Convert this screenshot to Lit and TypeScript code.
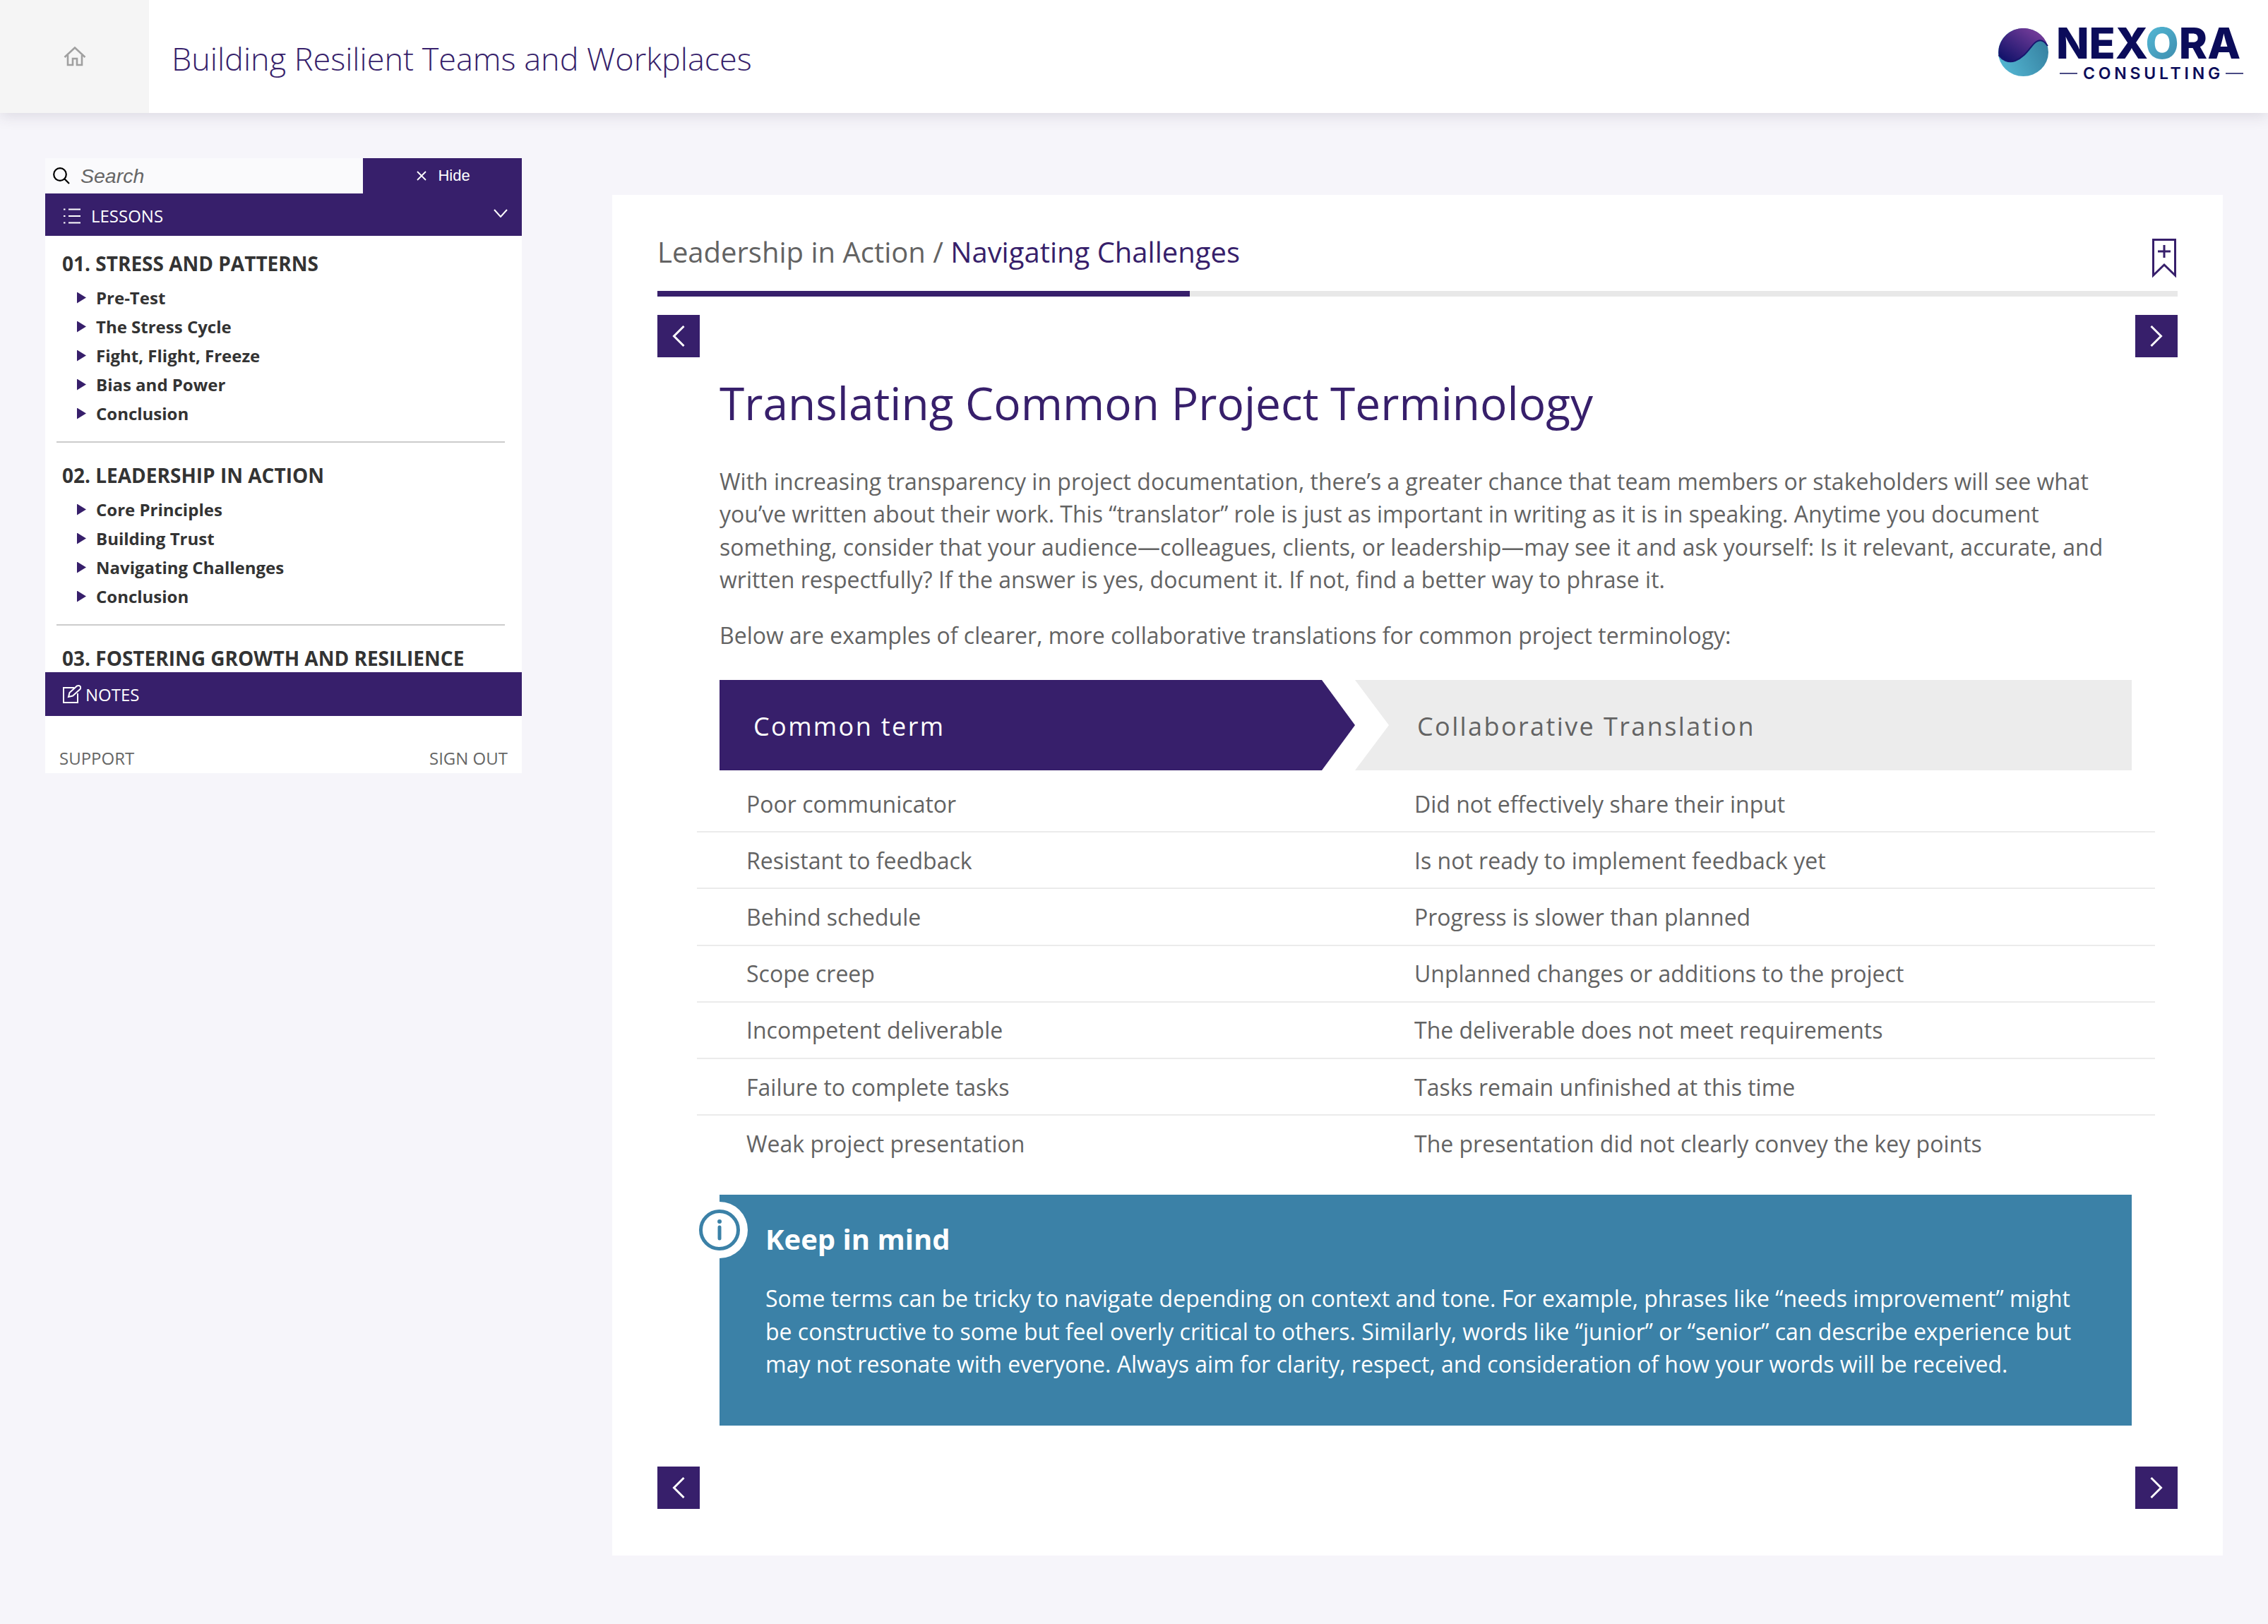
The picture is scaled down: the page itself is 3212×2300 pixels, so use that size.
import { LitElement, html, css } from 'lit';
import { customElement } from 'lit/decorators.js';

const sections = [
  { title: '01. STRESS AND PATTERNS', items: ['Pre-Test', 'The Stress Cycle', 'Fight, Flight, Freeze', 'Bias and Power', 'Conclusion'] },
  { title: '02. LEADERSHIP IN ACTION', items: ['Core Principles', 'Building Trust', 'Navigating Challenges', 'Conclusion'] },
  { title: '03. FOSTERING GROWTH AND RESILIENCE', items: [] as string[] },
];

const rows = [
  ['Poor communicator', 'Did not effectively share their input'],
  ['Resistant to feedback', 'Is not ready to implement feedback yet'],
  ['Behind schedule', 'Progress is slower than planned'],
  ['Scope creep', 'Unplanned changes or additions to the project'],
  ['Incompetent deliverable', 'The deliverable does not meet requirements'],
  ['Failure to complete tasks', 'Tasks remain unfinished at this time'],
  ['Weak project presentation', 'The presentation did not clearly convey the key points'],
];

const chevron = (d: string) => html`<svg viewBox="0 0 18 30" width="18" height="30"><path d=${d} fill="none" stroke="#fff" stroke-width="3"/></svg>`;
const prev = 'M16.5 1 L2.5 15 L16.5 29';
const next = 'M1.5 1 L15.5 15 L1.5 29';

@customElement('app-root')
export class AppRoot extends LitElement {
  static styles = css`
    :host {
      display: block;
      min-height: 2300px;
      background: #f6f5fa;
      font-family: 'Open Sans', 'Noto Sans', sans-serif;
      color: #636363;
    }

    .top {
      height: 160px;
      background: #fff;
      display: flex;
      align-items: center;
      box-shadow: 0 4px 20px rgba(60, 50, 80, 0.14);
      position: relative;
    }
    .home {
      width: 211px;
      height: 160px;
      background: #f5f5f5;
      display: flex;
      align-items: center;
      justify-content: center;
    }
    .courseTitle {
      margin: 4px 0 0 32px;
      font-size: 45px;
      font-weight: 300;
      color: #371f6b;
      flex: 1;
    }

    .logo {
      display: flex;
      align-self: flex-start;
      gap: 11px;
      margin-right: 35px;
    }
    .logoMark {
      margin-top: 40px;
    }
    .logoWords {
      margin-top: 30px;
      display: flex;
      flex-direction: column;
      font-family: Inter, sans-serif;
      color: #0b0c5a;
    }
    .nexora {
      font-size: 61px;
      font-weight: 800;
      line-height: 62px;
    }
    .nexora span {
      background: linear-gradient(135deg, #56bfdb, #3b86a8);
      -webkit-background-clip: text;
      background-clip: text;
      color: transparent;
    }
    .consulting {
      display: flex;
      align-items: center;
      gap: 8px;
      padding-left: 5px;
      font-size: 23px;
      font-weight: 600;
      line-height: 24px;
      letter-spacing: 4.8px;
    }
    .consulting span {
      margin-right: -5px;
    }
    .consulting i {
      display: block;
      width: 25px;
      height: 2px;
      background: #4a4b85;
    }

    .page {
      display: flex;
      align-items: flex-start;
      padding: 64px 64px 0 64px;
    }

    .side {
      width: 675px;
      background: #fff;
      flex: none;
    }
    .searchRow {
      display: flex;
      height: 50px;
    }
    .search {
      flex: 1;
      background: #fafafc;
      display: flex;
      align-items: center;
      gap: 15px;
      padding-left: 11px;
      font: italic 28.5px 'Liberation Sans', Arial, sans-serif;
      color: #666;
    }
    .hide {
      width: 225px;
      box-sizing: border-box;
      padding-left: 3px;
      background: #371f6b;
      color: #fff;
      display: flex;
      align-items: center;
      justify-content: center;
      gap: 16px;
      font: 22px 'Liberation Sans', Arial, sans-serif;
    }
    .lessons {
      height: 60px;
      box-sizing: border-box;
      background: #371f6b;
      color: #fff;
      display: flex;
      align-items: center;
      gap: 15px;
      padding: 3px 20px 0 26px;
      font-size: 24px;
    }
    .lessons .arrow {
      margin-left: auto;
      margin-top: -7px;
    }
    .tree {
      height: 618px;
      overflow: hidden;
      padding: 0 24px 0 16px;
      box-sizing: border-box;
    }
    .section {
      border-bottom: 2px solid #cccccc;
      padding: 27px 0 19px;
    }
    .section:first-child {
      padding-top: 20px;
    }
    .section:last-child {
      border-bottom: none;
    }
    .section h3 {
      margin: 0;
      padding-left: 8px;
      font-size: 28px;
      line-height: 38px;
      font-weight: 700;
      color: #333;
    }
    .section ul {
      list-style: none;
      margin: 9px 0 0 0;
      padding: 0;
    }
    .section li {
      height: 41px;
      display: flex;
      align-items: center;
      gap: 14px;
      padding-left: 29px;
      font-size: 24px;
      font-weight: 700;
      color: #333;
    }
    .tri {
      width: 13px;
      height: 16px;
      background: #371f6b;
      clip-path: polygon(0 0, 100% 50%, 0 100%);
    }
    .notes {
      height: 62px;
      background: #371f6b;
      color: #fff;
      display: flex;
      align-items: center;
      gap: 6px;
      padding-left: 25px;
      font-size: 24px;
    }
    .sideFoot {
      height: 81px;
      box-sizing: border-box;
      display: flex;
      justify-content: space-between;
      align-items: flex-end;
      padding: 0 20px 5px 20px;
      font-size: 24px;
      line-height: 32px;
      color: #666;
    }

    .card {
      margin: 52px 0 0 128px;
      width: 2281px;
      height: 1927px;
      background: #fff;
      box-sizing: border-box;
      padding: 0 64px;
      display: flex;
      flex-direction: column;
    }
    .crumbRow {
      height: 136px;
      display: flex;
      align-items: flex-start;
      justify-content: space-between;
    }
    .crumb {
      margin-top: 53px;
      font-size: 40px;
      line-height: 56px;
      color: #636363;
    }
    .crumb b {
      font-weight: 400;
      color: #371f6b;
    }
    .mark {
      margin: 62px 2px 0 0;
    }
    .progress {
      height: 8px;
      background: #e8e8e8;
    }
    .progress div {
      height: 100%;
      background: #371f6b;
    }
    .navRow {
      display: flex;
      justify-content: space-between;
    }
    .navRow.first {
      margin-top: 26px;
    }
    .navRow.last {
      margin-bottom: 66px;
    }
    .navBtn {
      width: 60px;
      height: 60px;
      background: #371f6b;
      display: flex;
      align-items: center;
      justify-content: center;
    }
    .content {
      padding-left: 88px;
      padding-right: 65px;
      flex: 1;
    }
    h1 {
      margin: 20px 0 0 0;
      font-size: 64px;
      line-height: 90px;
      font-weight: 400;
      color: #371f6b;
    }
    .content p {
      margin: 0;
      font-size: 32px;
      line-height: 46.4px;
    }
    .content p.intro {
      margin-top: 43px;
    }
    .content p.intro2 {
      margin-top: 32px;
    }

    .termsHead {
      margin-top: 40px;
      display: flex;
      height: 128px;
      font-size: 36px;
      letter-spacing: 2.4px;
    }
    .termHeadA {
      width: 900px;
      background: #371f6b;
      color: #fff;
      clip-path: polygon(0 0, 853px 0, 100% 50%, 853px 100%, 0 100%);
      display: flex;
      align-items: center;
      padding: 3px 0 0 48px;
      box-sizing: border-box;
    }
    .termHeadB {
      width: 1100px;
      background: #ececec;
      clip-path: polygon(0 0, 100% 0, 100% 100%, 0 100%, 48px 50%);
      display: flex;
      align-items: center;
      padding: 3px 0 0 88px;
      box-sizing: border-box;
    }
    .termRows {
      margin: 8px -33px 0 -32px;
    }
    .termRow {
      height: 78.2px;
      border-bottom: 2px solid #ebebeb;
      display: grid;
      grid-template-columns: 946px 1fr;
      align-items: center;
      padding-left: 70px;
      font-size: 32px;
    }
    .termRow:last-child {
      border-bottom: none;
    }

    .callout {
      position: relative;
      margin-top: 33.8px;
      height: 327px;
      background: #3b81a7;
      color: #fff;
      box-sizing: border-box;
      padding: 35px 65px 0 65px;
    }
    .callout h4 {
      margin: 0 0 33px 0;
      font-size: 40px;
      line-height: 56px;
      font-weight: 700;
    }
    .infoBadge {
      position: absolute;
      left: -40px;
      top: 10px;
      width: 80px;
      height: 80px;
      border-radius: 50%;
      background: #fff;
      display: flex;
      align-items: center;
      justify-content: center;
    }
  `;

  render() {
    return html`
      <header class="top">
        <div class="home">
          <svg width="32" height="28" viewBox="0 0 32 28" fill="none" stroke="#a0a0a0" stroke-width="2.6">
            <path d="M1.5 15 L16 1.5 L30.5 15"/>
            <path d="M6 12 V26 H13 V17 H19 V26 H26 V12"/>
          </svg>
        </div>
        <h2 class="courseTitle">Building Resilient Teams and Workplaces</h2>
        <div class="logo">
          <svg class="logoMark" width="71" height="68" viewBox="0 0 71 68">
            <defs>
              <linearGradient id="lgTop" x1="0.1" y1="0.9" x2="0.9" y2="0.1">
                <stop offset="0" stop-color="#14136b"/>
                <stop offset="1" stop-color="#7a3f9c"/>
              </linearGradient>
              <linearGradient id="lgBot" x1="0" y1="0.8" x2="1" y2="0.3">
                <stop offset="0" stop-color="#54b8d4"/>
                <stop offset="1" stop-color="#357f9f"/>
              </linearGradient>
            </defs>
            <ellipse cx="35.5" cy="34" rx="35.5" ry="34" fill="url(#lgBot)"/>
            <path d="M0.5 38 A35.5 34 0 0 1 70 25 C66 19 60 15 54 19 C46 24 40 40 24 46 C14 50 5 44 0.5 38 Z" fill="url(#lgTop)"/>
            <path d="M70 25 C66 19 60 15 54 19 C46 24 40 40 24 46 C14 50 5 44 0.5 38" fill="none" stroke="#17166e" stroke-width="2"/>
          </svg>
          <div class="logoWords">
            <div class="nexora">NEX<span>O</span>RA</div>
            <div class="consulting"><i></i><span>CONSULTING</span><i></i></div>
          </div>
        </div>
      </header>
      <div class="page">
        <aside class="side">
          <div class="searchRow">
            <div class="search">
              <svg width="24" height="24" viewBox="0 0 24 24" fill="none" stroke="#000" stroke-width="2.2">
                <circle cx="10" cy="10" r="8.8"/><path d="M16 16 L23 23"/>
              </svg>
              Search
            </div>
            <div class="hide">
              <svg width="14" height="14" viewBox="0 0 14 14" stroke="#fff" stroke-width="1.8"><path d="M1 1 L13 13 M13 1 L1 13"/></svg>
              Hide
            </div>
          </div>
          <div class="lessons">
            <svg width="24" height="22" viewBox="0 0 24 22" stroke="#fff" stroke-width="2" fill="none">
              <path d="M0 1.5 H2.5 M7 1.5 H24 M0 11 H2.5 M7 11 H24 M0 20.5 H2.5 M7 20.5 H24"/>
            </svg>
            LESSONS
            <svg class="arrow" width="20" height="12" viewBox="0 0 20 12" fill="none" stroke="#fff" stroke-width="2"><path d="M1 1 L10 11 L19 1"/></svg>
          </div>
          <div class="tree">
            ${sections.map(
              (s) => html`
                <section class="section">
                  <h3>${s.title}</h3>
                  ${s.items.length
                    ? html`<ul>${s.items.map((i) => html`<li><span class="tri"></span>${i}</li>`)}</ul>`
                    : ''}
                </section>
              `,
            )}
          </div>
          <div class="notes">
            <svg width="26" height="26" viewBox="0 0 26 26" fill="none" stroke="#fff" stroke-width="2">
              <path d="M16 4 H1 V25 H21 V12"/>
              <path d="M8 17 L9.5 11 L20 1.5 Q23 0.5 24.5 2 Q26 4 24.5 6 L14 15.5 Z"/>
            </svg>
            NOTES
          </div>
          <div class="sideFoot"><span>SUPPORT</span><span>SIGN OUT</span></div>
        </aside>
        <main class="card">
          <div class="crumbRow">
            <div class="crumb">Leadership in Action / <b>Navigating Challenges</b></div>
            <svg class="mark" width="34" height="56" viewBox="0 0 34 56" fill="none" stroke="#371f6b" stroke-width="3">
              <path d="M1.5 1.5 H32.5 V52 L17 37 L1.5 52 Z"/>
              <path d="M17 9 V27 M8 18 H26"/>
            </svg>
          </div>
          <div class="progress"><div style="width: 35%"></div></div>
          <div class="navRow first">
            <div class="navBtn">${chevron(prev)}</div>
            <div class="navBtn">${chevron(next)}</div>
          </div>
          <div class="content">
            <h1>Translating Common Project Terminology</h1>
            <p class="intro">With increasing transparency in project documentation, there’s a greater chance that team members or stakeholders will see what you’ve written about their work. This “translator” role is just as important in writing as it is in speaking. Anytime you document something, consider that your audience—colleagues, clients, or leadership—may see it and ask yourself: Is it relevant, accurate, and written respectfully? If the answer is yes, document it. If not, find a better way to phrase it.</p>
            <p class="intro2">Below are examples of clearer, more collaborative translations for common project terminology:</p>
            <div class="termsHead">
              <div class="termHeadA">Common term</div>
              <div class="termHeadB">Collaborative Translation</div>
            </div>
            <div class="termRows">
              ${rows.map((r) => html`<div class="termRow"><span>${r[0]}</span><span>${r[1]}</span></div>`)}
            </div>
            <div class="callout">
              <div class="infoBadge">
                <svg width="58" height="58" viewBox="0 0 58 58" fill="none" stroke="#3b81a7">
                  <circle cx="29" cy="29" r="26.5" stroke-width="5"/>
                  <circle cx="29" cy="17" r="3" fill="#3b81a7" stroke="none"/>
                  <path d="M29 25 V41" stroke-width="5" stroke-linecap="round"/>
                </svg>
              </div>
              <h4>Keep in mind</h4>
              <p>Some terms can be tricky to navigate depending on context and tone. For example, phrases like “needs improvement” might be constructive to some but feel overly critical to others. Similarly, words like “junior” or “senior” can describe experience but may not resonate with everyone. Always aim for clarity, respect, and consideration of how your words will be received.</p>
            </div>
          </div>
          <div class="navRow last">
            <div class="navBtn">${chevron(prev)}</div>
            <div class="navBtn">${chevron(next)}</div>
          </div>
        </main>
      </div>
    `;
  }
}
